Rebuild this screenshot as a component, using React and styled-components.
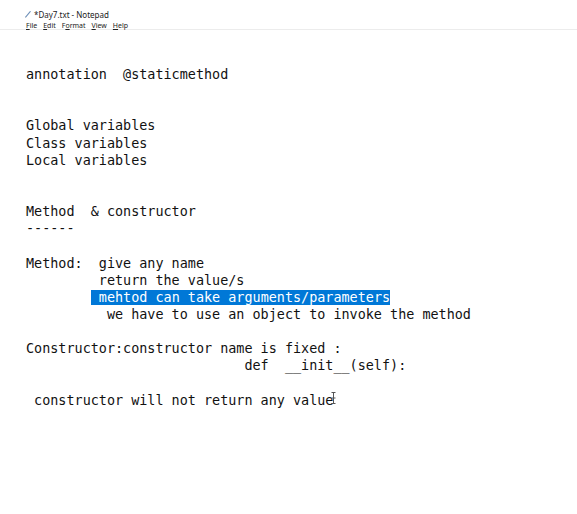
import styled, { createGlobalStyle } from 'styled-components';

const Global = createGlobalStyle`
body {
    margin: 0;
    background: #ffffff;
}
`;

const lines = [
    'annotation  @staticmethod',
    '',
    '',
    'Global variables',
    'Class variables',
    'Local variables',
    '',
    '',
    'Method  & constructor',
    '------',
    '',
    'Method:  give any name',
    '         return the value/s',
    { pre: '        ', sel: ' mehtod can take arguments/parameters' },
    '          we have to use an object to invoke the method',
    '',
    'Constructor:constructor name is fixed :',
    '                           def  __init__(self):',
    '',
    { pre: ' constructor will not return any value', cursor: true },
];

const App = () => {
    return (
        <Window>
            <Global />
            <TitleBar>
                <TitleRow>
                    <NoteIcon viewBox="0 0 8 8">
                        <path d="M1 7 L6 1 L7 1.5 L2 7.5 Z" fill="#6d8fb8" />
                        <path d="M1 7 L2 7.5 L1 8 Z" fill="#9aa7b5" />
                    </NoteIcon>
                    <Title>*Day7.txt - Notepad</Title>
                </TitleRow>
                <Menu>
                    <MenuItem><u>F</u>ile</MenuItem>
                    <MenuItem><u>E</u>dit</MenuItem>
                    <MenuItem>F<u>o</u>rmat</MenuItem>
                    <MenuItem><u>V</u>iew</MenuItem>
                    <MenuItem><u>H</u>elp</MenuItem>
                </Menu>
            </TitleBar>

            <Editor>
                {lines.map((l, i) => {
                    if (typeof l === 'string') {
                        return <Line key={i}>{l || ' '}</Line>;
                    }
                    return (
                        <Line key={i}>
                            {l.pre}
                            {l.sel && <Selected>{l.sel}</Selected>}
                            {l.cursor && (
                                <Caret viewBox="0 0 5 12">
                                    <path d="M0.5 0.5 H4.5 M2.5 0.5 V11.5 M0.5 11.5 H4.5 M0.5 6 H4.5" stroke="#555" strokeWidth="1" fill="none" />
                                </Caret>
                            )}
                        </Line>
                    );
                })}
            </Editor>
        </Window>
    );
};

const Window = styled.div`
width: 577px;
height: 514px;
background: #ffffff;
overflow: hidden;
`;

const TitleBar = styled.div`
height: 30px;
border-bottom: 1px solid #ececec;
padding-left: 24px;
box-sizing: border-box;
font-family: "Segoe UI", "Noto Sans", "Liberation Sans", sans-serif;
color: #222;
`;

const TitleRow = styled.div`
display: flex;
align-items: center;
gap: 2px;
padding-top: 9px;
height: 10px;
`;

const NoteIcon = styled.svg`
width: 8px;
height: 8px;
`;

const Title = styled.span`
font-size: 8px;
`;

const Menu = styled.div`
display: flex;
gap: 6px;
margin-top: 2px;
padding-left: 2px;
`;

const MenuItem = styled.span`
font-size: 7px;

u {
    text-decoration-thickness: 0.5px;
}
`;

const Editor = styled.div`
padding: 36px 0 0 26px;
font-family: "DejaVu Sans Mono", monospace;
font-size: 13.45px;
line-height: 17.15px;
color: #111;
`;

const Line = styled.div`
white-space: pre;
height: 17.15px;
`;

const Selected = styled.span`
background: #0078d7;
color: #ffffff;
`;

const Caret = styled.svg`
width: 5px;
height: 12px;
margin-left: -2px;
vertical-align: 1px;
`;

export default App;
